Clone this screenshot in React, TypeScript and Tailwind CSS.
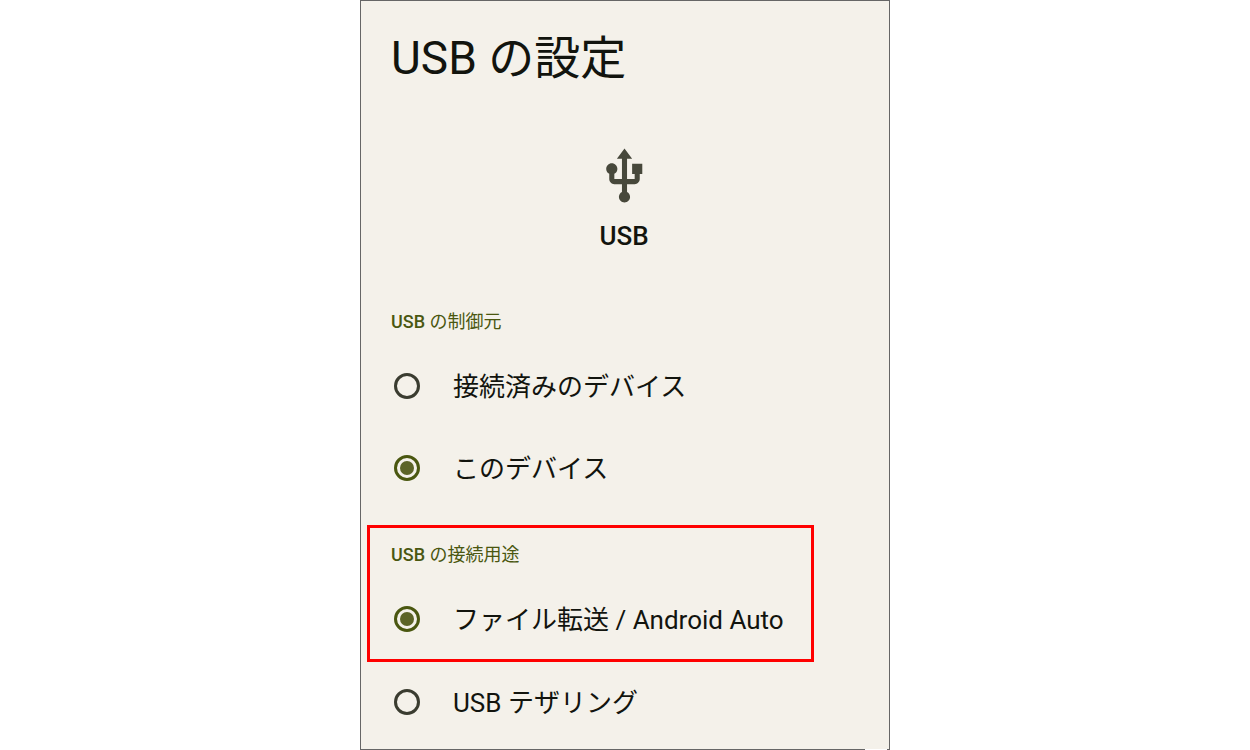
import React, { useState } from 'react';

type RadioOptionProps = {
  name: string;
  label: string;
  checked: boolean;
  onSelect: () => void;
};

const RadioOption = ({ name, label, checked, onSelect }: RadioOptionProps) => (
  <label className="flex min-h-10 cursor-pointer items-center gap-[33px] pl-[3px] text-[26px] leading-[38px]">
    <input
      type="radio"
      name={name}
      checked={checked}
      onChange={onSelect}
      className="size-[26px] shrink-0 appearance-none rounded-full border-[3px] border-[#3a3c30] bg-clip-content p-[3px] checked:border-[#4a5710] checked:bg-[#5c6427]"
    />
    <span className="pt-0.5">{label}</span>
  </label>
);

const SectionLabel = ({ children }: { children: React.ReactNode }) => (
  <h2 className="text-[18px] leading-6 text-[#4a5710]">
    <span className="font-medium">USB</span> {children}
  </h2>
);

const UsbIcon = () => (
  <svg viewBox="0 0 24 24" className="size-[61px] fill-[#47483b]" aria-hidden="true">
    <path d="M15 7v4h1v2h-3V5h2l-3-4-3 4h2v8H8v-2.07c.7-.37 1.2-1.08 1.2-1.93 0-1.21-.99-2.2-2.2-2.2-1.21 0-2.2.99-2.2 2.2 0 .85.5 1.56 1.2 1.93V13c0 1.11.89 2 2 2h3v3.05c-.71.37-1.2 1.1-1.2 1.95 0 1.22.99 2.2 2.2 2.2 1.21 0 2.2-.98 2.2-2.2 0-.85-.49-1.58-1.2-1.95V15h3c1.11 0 2-.89 2-2v-2h1V7h-4z" />
  </svg>
);

const App = () => {
  const [controller, setController] = useState('this');
  const [usage, setUsage] = useState('file');

  return (
    <div className="bg-white font-['Roboto','Noto_Sans_CJK_JP',sans-serif] text-[#12140e]" lang="ja">
      <main className="relative mx-auto max-w-[530px] border border-[#666666] bg-[#f4f1ea] pb-[27px]">
        <h1 className="px-[30px] pt-[27px] text-[46px] leading-[60px]">USB の設定</h1>

        <div className="mt-[58px] flex flex-col items-center gap-[11px] pr-0.5">
          <UsbIcon />
          <p className="text-[26px] leading-9 font-medium">USB</p>
        </div>

        <section className="mt-14 px-[30px]">
          <SectionLabel>の制御元</SectionLabel>
          <div className="mt-8 flex flex-col gap-[42px]">
            <RadioOption
              name="controller"
              label="接続済みのデバイス"
              checked={controller === 'connected'}
              onSelect={() => setController('connected')}
            />
            <RadioOption
              name="controller"
              label="このデバイス"
              checked={controller === 'this'}
              onSelect={() => setController('this')}
            />
          </div>
        </section>

        <section className="mt-[37px]">
          {/* Highlighted part of the list */}
          <div className="mx-[6px] max-w-[447px] border-[3px] border-[#ff0000] px-[21px] pt-[15px] pb-5">
            <SectionLabel>の接続用途</SectionLabel>
            <div className="mt-8">
              <RadioOption
                name="usage"
                label="ファイル転送 / Android Auto"
                checked={usage === 'file'}
                onSelect={() => setUsage('file')}
              />
            </div>
          </div>
          <div className="mt-5 px-[30px]">
            <RadioOption
              name="usage"
              label="USB テザリング"
              checked={usage === 'tethering'}
              onSelect={() => setUsage('tethering')}
            />
          </div>
        </section>

        {/* Break in the bottom border */}
        <span className="absolute right-0.5 -bottom-px h-px w-[22px] bg-white" />
      </main>
    </div>
  );
};

export default App;
